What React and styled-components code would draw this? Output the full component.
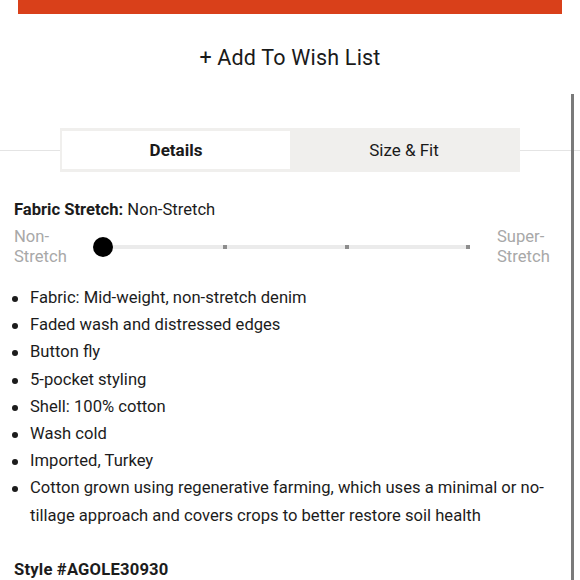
import React from "react";
import styled, { createGlobalStyle } from "styled-components";

const GlobalStyle = createGlobalStyle`
  html, body {
    margin: 0;
    padding: 0;
    background: #fff;
  }
  body {
    font-family: Roboto, "Liberation Sans", sans-serif;
    color: #1c1c1c;
    overflow: hidden;
  }
`;

const Page = styled.div`
  position: relative;
  width: 580px;
  height: 580px;
  overflow: hidden;
`;

const AddToBag = styled.div`
  height: 14px;
  margin: 0 18px;
  background: #d9401a;
`;

const WishLink = styled.div`
  margin-top: 31px;
  text-align: center;
  font-size: 21.5px;
  letter-spacing: 0.2px;
  line-height: 26px;
  color: #1a1a1a;
`;

const ScrollThumb = styled.div`
  position: absolute;
  right: 6px;
  top: 94px;
  bottom: 0;
  width: 3px;
  background: #7a7a7a;
`;

const TabRow = styled.div`
  margin-top: 57px;
  background: linear-gradient(#e4e4e4, #e4e4e4) 0 50% / 100% 1px no-repeat;
  padding: 0 60px;
`;

const Tabs = styled.div`
  display: flex;
  background: #f0efed;
  padding: 3px 2px;
  height: 38px;
`;

const Tab = styled.div`
  flex: 1;
  display: flex;
  align-items: center;
  justify-content: center;
  font-size: 17px;
  font-weight: ${({ $active }) => ($active ? 700 : 400)};
  background: ${({ $active }) => ($active ? "#fff" : "transparent")};
  color: #1a1a1a;
`;

const Details = styled.div`
  padding: 0 14px;
  font-size: 16.6px;
`;

const StretchTitle = styled.div`
  margin-top: 28px;
  line-height: 20px;
  b {
    font-weight: 700;
  }
`;

const SliderRow = styled.div`
  display: flex;
  align-items: center;
  margin-top: 7px;
`;

const EndLabel = styled.div`
  width: ${({ $w }) => $w}px;
  line-height: 20px;
  color: #a8a8a8;
`;

const Track = styled.div`
  position: relative;
  flex: 0 0 367px;
  margin: 0 27px 0 23px;
  height: 4px;
  background: #ebebeb;
  display: flex;
  justify-content: space-between;
  align-items: center;
  padding-left: 120px;
  box-sizing: border-box;
`;

const Tick = styled.span`
  width: 4px;
  height: 4px;
  background: #8d8d8d;
`;

const Knob = styled.span`
  position: absolute;
  left: -10px;
  top: 50%;
  width: 20px;
  height: 20px;
  margin-top: -10px;
  border-radius: 50%;
  background: #000;
`;

const List = styled.ul`
  margin: 17px 0 0;
  padding: 0;
  list-style: none;
  line-height: 27.2px;
  color: #1c1c1c;
`;

const Item = styled.li`
  position: relative;
  padding-left: 16px;
  &::before {
    content: "";
    position: absolute;
    left: -2px;
    top: 12px;
    width: 6px;
    height: 6px;
    border-radius: 50%;
    background: #1c1c1c;
  }
`;

const StyleNo = styled.div`
  margin-top: 31px;
  font-weight: 700;
  letter-spacing: 0.2px;
`;

const bullets = [
  "Fabric: Mid-weight, non-stretch denim",
  "Faded wash and distressed edges",
  "Button fly",
  "5-pocket styling",
  "Shell: 100% cotton",
  "Wash cold",
  "Imported, Turkey",
  "Cotton grown using regenerative farming, which uses a minimal or no-tillage approach and covers crops to better restore soil health",
];

const StretchSlider = () => (
  <SliderRow>
    <EndLabel $w={66}>
      Non-
      <br />
      Stretch
    </EndLabel>
    <Track>
      <Knob />
      <Tick />
      <Tick />
      <Tick />
    </Track>
    <EndLabel $w={60}>
      Super-
      <br />
      Stretch
    </EndLabel>
  </SliderRow>
);

const App = () => {
  return (
    <Page>
      <GlobalStyle />
      <AddToBag />
      <WishLink>+ Add To Wish List</WishLink>
      <TabRow>
        <Tabs>
          <Tab $active>Details</Tab>
          <Tab>Size &amp; Fit</Tab>
        </Tabs>
      </TabRow>
      <Details>
        <StretchTitle>
          <b>Fabric Stretch:</b> Non-Stretch
        </StretchTitle>
        <StretchSlider />
        <List>
          {bullets.map((b) => (
            <Item key={b}>{b}</Item>
          ))}
        </List>
        <StyleNo>Style #AGOLE30930</StyleNo>
      </Details>
      <ScrollThumb />
    </Page>
  );
};

export default App;
